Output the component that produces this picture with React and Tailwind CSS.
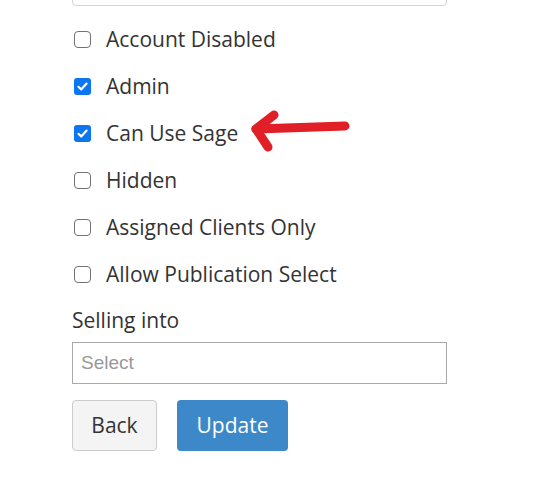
import React from "react";

function Box({ checked }) {
  if (checked) {
    return (
      <span className="ml-[2px] flex h-[17px] w-[17px] shrink-0 items-center justify-center rounded-[3px] bg-[#0b76f0]">
        <svg width="13" height="13" viewBox="0 0 13 13">
          <path d="M2.5 6.8 L5.2 9.4 L10.6 3.6" fill="none" stroke="white" strokeWidth="2.2" strokeLinecap="round" strokeLinejoin="round" />
        </svg>
      </span>
    );
  }
  return <span className="ml-[2px] h-[17px] w-[17px] shrink-0 rounded-[4px] border-[1.5px] border-[#727272] bg-white" />;
}

function Row({ label, checked }) {
  return (
    <div className="flex h-[47px] items-center">
      <Box checked={checked} />
      <span className="ml-[15px] -translate-y-[1px] text-[21px] leading-[28px] text-[#333]">{label}</span>
    </div>
  );
}

export default function App() {
  const rows = [
    ["Account Disabled", false],
    ["Admin", true],
    ["Can Use Sage", true],
    ["Hidden", false],
    ["Assigned Clients Only", false],
    ["Allow Publication Select", false],
  ];
  return (
    <div className="relative h-[496px] w-[537px] overflow-hidden bg-white font-['Open_Sans',sans-serif]">
      <div className="ml-[72px] w-[375px]">
        <div className="-mt-[36px] h-[42px] rounded-[4px] border border-[#d4d4d4] bg-white" />
        <div className="mt-[10px]">
          {rows.map(([l, c]) => (
            <Row key={l} label={l} checked={c} />
          ))}
        </div>
        <div className="mt-[8px] text-[21px] leading-[28px] text-[#333]">Selling into</div>
        <div className="mt-[8px] flex h-[42px] items-center border border-[#aaa] bg-white pl-[8px] font-['Liberation_Sans',sans-serif] text-[19px] text-[#999]">
          Select
        </div>
        <div className="mt-[16px] flex gap-[20px]">
          <button className="h-[51px] w-[85px] rounded-[4px] border border-[#ccc] bg-[#f4f4f4] text-[21px] text-[#333]">Back</button>
          <button className="h-[51px] w-[111px] rounded-[4px] bg-[#3d88c8] text-[21px] text-white">Update</button>
        </div>
      </div>
      <svg className="absolute left-0 top-0" width="537" height="496" viewBox="0 0 537 496">
        <g fill="none" stroke="#e11f26" strokeWidth="9" strokeLinecap="round" strokeLinejoin="round">
          <path d="M345 126 L256 129" />
          <path d="M274 115 L256 129 L268 147" />
        </g>
      </svg>
    </div>
  );
}
